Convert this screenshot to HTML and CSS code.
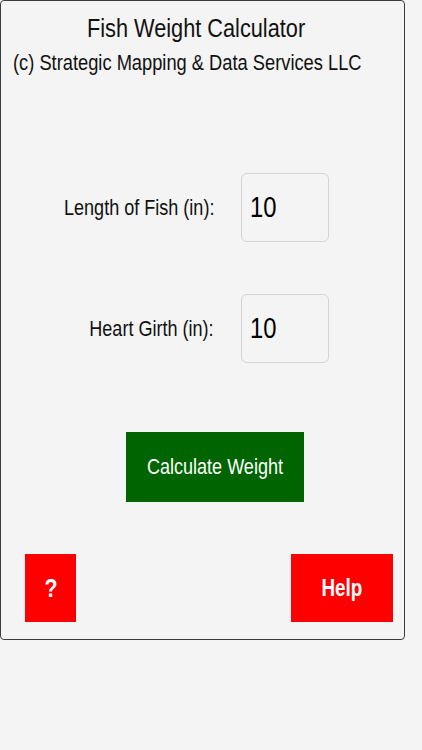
FILE: index.html
```html
<!DOCTYPE html>
<html lang="en">
<head>
<meta charset="utf-8">
<title>Fish Weight Calculator</title>
<link rel="stylesheet" href="styles.css">
</head>
<body>
<div class="card">
  <h1 class="title"><span class="nar nar-c">Fish Weight Calculator</span></h1>
  <p class="subtitle"><span class="nar nar-l">(c) Strategic Mapping &amp; Data Services LLC</span></p>
  <div class="row row-first">
    <div class="label"><span class="nar nar-r">Length of Fish (in):</span></div>
    <div class="field"><span class="nar nar-l">10</span></div>
  </div>
  <div class="row row-second">
    <div class="label"><span class="nar nar-r">Heart Girth (in):</span></div>
    <div class="field"><span class="nar nar-l">10</span></div>
  </div>
  <div class="calc-wrap">
    <button class="calc" type="button"><span class="nar nar-c">Calculate Weight</span></button>
  </div>
  <div class="bottom">
    <button class="red-btn q" type="button"><span class="nar nar-c">?</span></button>
    <button class="red-btn help" type="button"><span class="nar nar-c">Help</span></button>
  </div>
</div>
</body>
</html>
```
FILE: styles.css
```css
html, body {
  margin: 0;
  padding: 0;
  background: #f4f4f4;
}
body {
  width: 422px;
  height: 750px;
  font-family: "Liberation Sans", Arial, sans-serif;
  color: #111;
}
.nar {
  display: inline-block;
  white-space: nowrap;
  transform: scaleX(0.82);
}
.nar-c { transform-origin: center; }
.nar-l { transform-origin: left center; }
.nar-r { transform-origin: right center; }
.card {
  box-sizing: border-box;
  width: 405px;
  height: 640px;
  border: 1px solid #3c3c3c;
  border-radius: 4px;
  background: #f4f4f4;
  padding-top: 12px;
}
.title {
  margin: 0;
  font-size: 26.5px;
  line-height: 30px;
  font-weight: normal;
  text-align: center;
  padding-right: 12px;
  white-space: nowrap;
}
.subtitle {
  margin: 7px 0 0 0;
  padding-left: 12px;
  font-size: 22.3px;
  line-height: 26px;
  white-space: nowrap;
}
.row {
  display: flex;
  align-items: center;
  gap: 27px;
}
.row-first {
  margin-top: 97px;
}
.row-second {
  margin-top: 52px;
}
.label {
  width: 213px;
  text-align: right;
  font-size: 22px;
  white-space: nowrap;
}
.field {
  box-sizing: border-box;
  width: 88px;
  height: 69px;
  border: 1px solid #d4d4d4;
  border-radius: 6px;
  background: #f4f4f4;
  padding: 0 0 0 8px;
  display: flex;
  align-items: center;
  font-size: 29px;
  color: #000;
}
.calc-wrap {
  margin-top: 69px;
  padding-left: 125px;
}
.calc {
  width: 178px;
  height: 70px;
  border: none;
  background: #006400;
  color: #fff;
  font-family: inherit;
  font-size: 22px;
  padding: 0;
}
.bottom {
  margin-top: 52px;
  display: flex;
  justify-content: space-between;
  padding: 0 11px 0 24px;
}
.red-btn {
  height: 68px;
  border: none;
  background: #ff0000;
  color: #fff;
  font-family: inherit;
  font-size: 23px;
  font-weight: bold;
  padding: 0;
}
.q {
  width: 51px;
  font-size: 26px;
}
.help {
  width: 102px;
}
```
